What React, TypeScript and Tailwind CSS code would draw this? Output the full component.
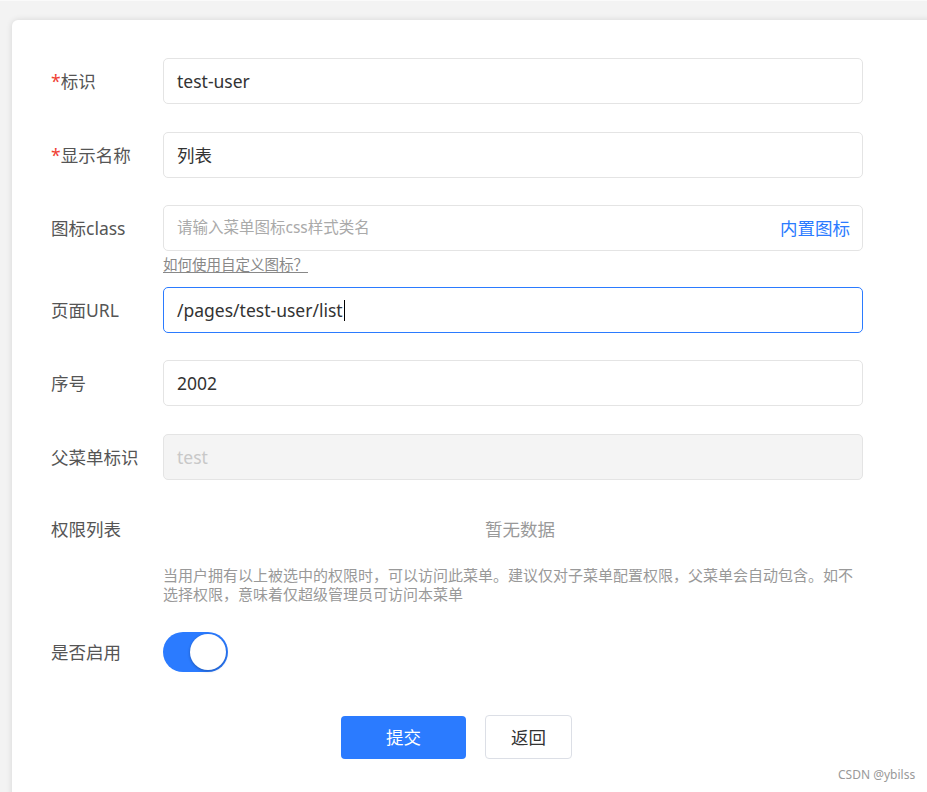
const font = { fontFamily: '"Noto Sans", "Noto Sans CJK SC", sans-serif' };

function Label({ text, required }: { text: string; required?: boolean }) {
  return (
    <div className="w-[112px] shrink-0 text-[17.5px] text-[#555]">
      {required && <span className="text-[#f04134]">*</span>}
      {text}
    </div>
  );
}

function Box({ children, className = "" }: { children?: React.ReactNode; className?: string }) {
  return (
    <div
      className={
        "w-[700px] h-[46px] rounded-[5px] border flex items-center px-[13px] text-[17.5px] " +
        className
      }
    >
      {children}
    </div>
  );
}

export default function App() {
  return (
    <div
      className="w-[927px] h-[792px] overflow-hidden bg-[#f3f3f3] border-t border-[#fafafa] pt-[19px] pl-[12px]"
      style={font}
    >
      <div className="w-[930px] h-[800px] bg-white rounded-[6px] shadow-[0_0_6px_rgba(0,0,0,0.12)] pl-[39px] pt-[38px] relative">
        <div className="flex items-center">
          <Label text="标识" required />
          <Box className="border-[#e4e4e4] text-[#333]">test-user</Box>
        </div>

        <div className="flex items-center mt-[28px]">
          <Label text="显示名称" required />
          <Box className="border-[#e4e4e4] text-[#333]">列表</Box>
        </div>

        <div className="flex items-center mt-[27px]">
          <Label text="图标class" />
          <Box className="border-[#e4e4e4] justify-between pr-[12px]">
            <span className="text-[15.5px] text-[#aaa]">请输入菜单图标css样式类名</span>
            <span className="text-[#2b7bff]">内置图标</span>
          </Box>
        </div>
        <div className="pl-[112px] mt-[4px] h-[18px] leading-[18px]">
          <span className="text-[14.5px] text-[#888] underline underline-offset-2">
            如何使用自定义图标？
          </span>
        </div>

        <div className="flex items-center mt-[14px]">
          <Label text="页面URL" />
          <Box className="border-[#2b7bff] text-[#333]">
            /pages/test-user/list
            <span className="inline-block w-[1px] h-[21px] bg-black ml-[1px]" />
          </Box>
        </div>

        <div className="flex items-center mt-[27px]">
          <Label text="序号" />
          <Box className="border-[#e4e4e4] text-[#333]">2002</Box>
        </div>

        <div className="flex items-center mt-[28px]">
          <Label text="父菜单标识" />
          <Box className="border-[#e4e4e4] bg-[#f4f4f4] text-[#c8c8c8]">test</Box>
        </div>

        <div className="flex items-center mt-[26px] h-[46px]">
          <Label text="权限列表" />
          <div className="w-[700px] text-center text-[17.5px] text-[#999] pl-[14px]">暂无数据</div>
        </div>
        <div className="pl-[112px] mt-[14px]">
          <div className="w-[700px] text-[15px] leading-[19px] text-[#999]">
            当用户拥有以上被选中的权限时，可以访问此菜单。建议仅对子菜单配置权限，父菜单会自动包含。如不选择权限，意味着仅超级管理员可访问本菜单
          </div>
        </div>

        <div className="flex items-center mt-[28px]">
          <Label text="是否启用" />
          <div className="w-[65px] h-[40px] rounded-full bg-[#2b7bff] flex items-center justify-end pr-[2px]">
            <div className="w-[36px] h-[36px] rounded-full bg-white shadow-[0_1px_3px_rgba(0,0,0,0.3)]" />
          </div>
        </div>

        <div className="flex items-center mt-[43px] pl-[290px] gap-[19px]">
          <div className="w-[125px] h-[43px] rounded-[4px] bg-[#2b7bff] text-white text-[17.5px] flex items-center justify-center">
            提交
          </div>
          <div className="w-[87px] h-[44px] rounded-[4px] border border-[#dcdfe6] text-[#333] text-[17.5px] flex items-center justify-center">
            返回
          </div>
        </div>

        <div className="absolute left-[826px] top-[746px] text-[12px] text-[#999]">CSDN @ybilss</div>
      </div>
    </div>
  );
}
